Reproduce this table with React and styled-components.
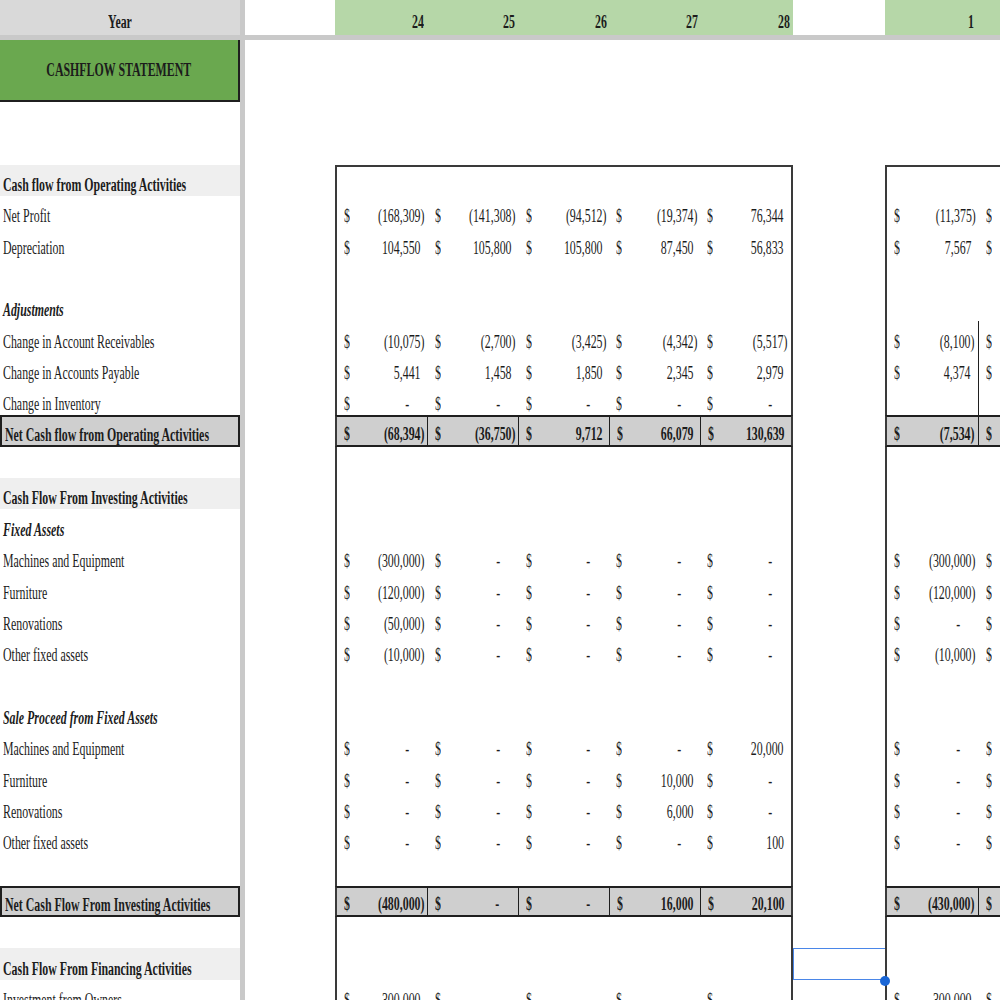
import React from 'react'
import styled, { createGlobalStyle, css } from 'styled-components'

const ROW_H = 31.35
const INK = '#1c1c1c'
const FRAME = '2px solid #3a3a3a'
const RULE = '#1f1f1f'
const COL = 91.6

const GlobalStyle = createGlobalStyle`
  html, body {
    margin: 0;
    padding: 0;
    overflow: hidden;
    background: #fff;
  }
`

const Sheet = styled.div`
  width: 1000px;
  height: 1000px;
  overflow: hidden;
  font-family: 'Liberation Serif', 'Times New Roman', 'DejaVu Serif', serif;
  color: ${INK};
`

const Row = styled.div`
  display: flex;
  height: ${p => p.$h || ROW_H}px;
`

const FreezeBar = styled.div`
  height: 5px;
  background: #c9c9c9;
`

const FreezeCol = styled.div`
  width: 5px;
  flex: none;
  background: #c9c9c9;
`

const Label = styled.div`
  width: 240px;
  flex: none;
  box-sizing: border-box;
  display: flex;
  align-items: flex-end;
  padding: 0 0 1px 3px;
  ${p => p.$kind === 'header' && css`
    background: #d9d9d9;
    justify-content: center;
    padding: 0 0 3px;
  `}
  ${p => p.$kind === 'title' && css`
    background: #6aa84f;
    justify-content: center;
    align-items: center;
    padding: 0;
    border-right: 2px solid ${RULE};
    border-bottom: 2px solid ${RULE};
  `}
  ${p => p.$kind === 'section' && css`background: #efefef;`}
  ${p => p.$kind === 'total' && css`
    background: #cfcfcf;
    border: 2px solid ${RULE};
    padding-bottom: 0;
  `}
`

const Txt = styled.span`
  display: inline-block;
  white-space: nowrap;
  font-size: 18px;
  line-height: 20px;
  transform: scaleX(0.66);
  transform-origin: ${p => p.$origin || 'left'} center;
  font-weight: ${p => p.$bold ? 700 : 400};
  font-style: ${p => p.$italic ? 'italic' : 'normal'};
`

const Pad = styled.span`
  visibility: hidden;
`

const Spacer = styled.div`
  width: ${p => p.$w}px;
  flex: none;
  position: relative;
`

const Block = styled.div`
  width: ${p => p.$w}px;
  flex: none;
  display: flex;
  box-sizing: border-box;
  ${p => p.$fill && css`background: ${p.$fill};`}
  ${p => p.$framed && css`border-left: ${FRAME};`}
  ${p => p.$framed && p.$closed && css`border-right: ${FRAME};`}
  ${p => p.$top && css`border-top: ${FRAME};`}
  ${p => p.$total && css`
    background: #cfcfcf;
    border-top: 2px solid ${RULE};
    border-bottom: 2px solid ${RULE};
  `}
`

const Cell = styled.div`
  ${p => p.$w ? css`flex: none; width: ${p.$w}px;` : css`flex: 1 1 0;`}
  min-width: 0;
  box-sizing: border-box;
  display: flex;
  justify-content: ${p => p.$head ? 'flex-end' : 'space-between'};
  align-items: flex-end;
  padding: 0 3px ${p => p.$head ? 3 : 1}px 7px;
  ${p => p.$split && css`border-right: 1px solid ${RULE};`}
`

const Selection = styled.div`
  position: absolute;
  inset: 0;
  border: 1px solid #4a86e8;
  border-right: none;
`

const Handle = styled.div`
  position: absolute;
  right: -5px;
  bottom: -6px;
  width: 10px;
  height: 10px;
  border-radius: 50%;
  background: #1a66d6;
  z-index: 2;
`

const fmt = n => {
  if (n < 0) return [`(${Math.abs(n).toLocaleString('en-US')})`, '']
  if (n === 0) return ['-', '00)']
  return [n.toLocaleString('en-US'), ')']
}

const Money = ({ value, bold, split, w, dollarOnly }) => {
  if (dollarOnly) {
    return (
      <Cell $w={w} $split={split}>
        <Txt $bold={bold}>$</Txt>
      </Cell>
    )
  }
  const [text, pad] = fmt(value)
  return (
    <Cell $w={w} $split={split}>
      <Txt $bold={bold}>$</Txt>
      <Txt $bold={bold} $origin="right">{text}<Pad>{pad}</Pad></Txt>
    </Cell>
  )
}

const rows = [
  {},
  {},
  { label: 'Cash flow from Operating Activities', kind: 'section' },
  { label: 'Net Profit', c: [-168309, -141308, -94512, -19374, 76344], i: -11375 },
  { label: 'Depreciation', c: [104550, 105800, 105800, 87450, 56833], i: 7567 },
  {},
  { label: 'Adjustments', italic: true },
  { label: 'Change in Account Receivables', c: [-10075, -2700, -3425, -4342, -5517], i: -8100, iSplit: true },
  { label: 'Change in Accounts Payable', c: [5441, 1458, 1850, 2345, 2979], i: 4374, iSplit: true },
  { label: 'Change in Inventory', c: [0, 0, 0, 0, 0], iSplit: true },
  { label: 'Net Cash flow from Operating Activities', kind: 'total', c: [-68394, -36750, 9712, 66079, 130639], i: -7534 },
  {},
  { label: 'Cash Flow From Investing Activities', kind: 'section' },
  { label: 'Fixed Assets', italic: true },
  { label: 'Machines and Equipment', c: [-300000, 0, 0, 0, 0], i: -300000 },
  { label: 'Furniture', c: [-120000, 0, 0, 0, 0], i: -120000 },
  { label: 'Renovations', c: [-50000, 0, 0, 0, 0], i: 0 },
  { label: 'Other fixed assets', c: [-10000, 0, 0, 0, 0], i: -10000 },
  {},
  { label: 'Sale Proceed from Fixed Assets', italic: true },
  { label: 'Machines and Equipment', c: [0, 0, 0, 0, 20000], i: 0 },
  { label: 'Furniture', c: [0, 0, 0, 10000, 0], i: 0 },
  { label: 'Renovations', c: [0, 0, 0, 6000, 0], i: 0 },
  { label: 'Other fixed assets', c: [0, 0, 0, 0, 100], i: 0 },
  {},
  { label: 'Net Cash Flow From Investing Activities', kind: 'total', c: [-480000, 0, 0, 16000, 20100], i: -430000 },
  {},
  { label: 'Cash Flow From Financing Activities', kind: 'section', selected: true },
  { label: 'Investment from Owners', c: [300000, 0, 0, 0, 0], i: 300000 },
  {}
]

const years = [24, 25, 26, 27, 28]

const SheetRow = ({ row, index }) => {
  const framed = index >= 2
  const total = row.kind === 'total'
  const bold = total || row.kind === 'section'
  return (
    <Row>
      <Label $kind={row.kind}>
        {row.label && <Txt $bold={bold || row.italic} $italic={row.italic}>{row.label}</Txt>}
      </Label>
      <FreezeCol />
      <Spacer $w={90} />
      <Block $w={458} $framed={framed} $closed $top={index === 2} $total={total}>
        {row.c
          ? row.c.map((v, j) => <Money key={j} value={v} bold={total} split={total && j < 4} />)
          : <Cell />}
      </Block>
      <Spacer $w={92}>
        {row.selected && <><Selection /><Handle /></>}
      </Spacer>
      <Block $w={COL * 2 + 2} $framed={framed} $top={index === 2} $total={total}>
        {row.i !== undefined ? (
          <>
            <Money value={row.i} bold={total} split={total || row.iSplit} w={COL} />
            <Money dollarOnly bold={total} w={COL} />
          </>
        ) : (
          <Cell $w={COL} $split={row.iSplit} />
        )}
      </Block>
    </Row>
  )
}

export default function App() {
  return (
    <Sheet>
      <GlobalStyle />
      <Row $h={35}>
        <Label $kind="header"><Txt $bold $origin="center">Year</Txt></Label>
        <FreezeCol />
        <Spacer $w={90} />
        <Block $w={458} $fill="#b6d7a8">
          {years.map(y => (
            <Cell key={y} $head><Txt $bold $origin="right">{y}</Txt></Cell>
          ))}
        </Block>
        <Spacer $w={92} />
        <Block $w={COL * 2 + 2} $fill="#b6d7a8">
          <Cell $head $w={COL}><Txt $bold $origin="right">1</Txt></Cell>
          <Cell $head $w={COL} />
        </Block>
      </Row>
      <FreezeBar />
      <Row $h={62}>
        <Label $kind="title"><Txt $bold $origin="center">CASHFLOW STATEMENT</Txt></Label>
        <FreezeCol />
      </Row>
      {rows.map((row, i) => <SheetRow key={i} row={row} index={i} />)}
    </Sheet>
  )
}
